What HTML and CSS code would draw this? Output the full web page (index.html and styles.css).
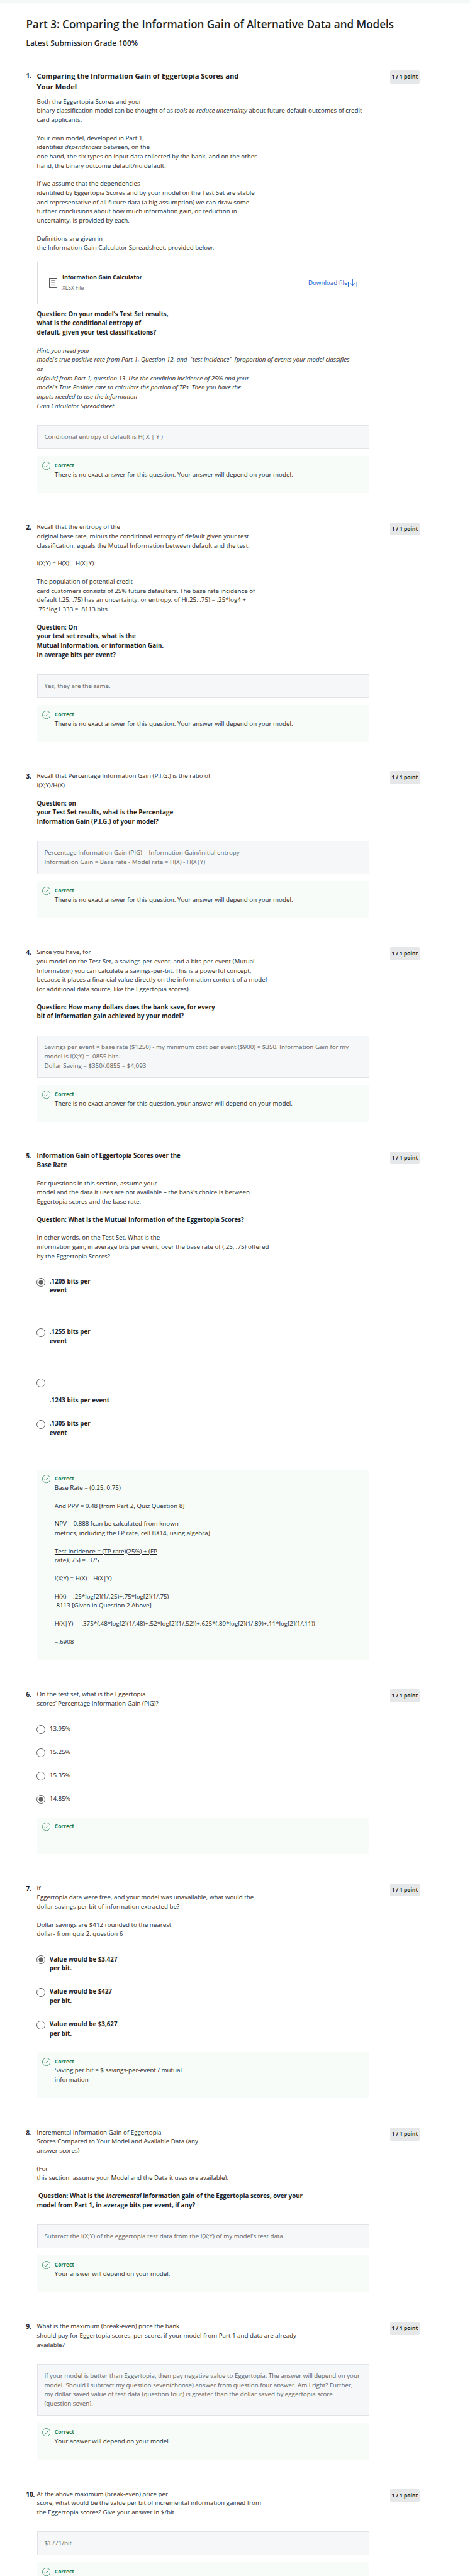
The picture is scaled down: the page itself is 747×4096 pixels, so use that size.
FILE: index.html
```html
<!DOCTYPE html>
<html lang="en">
<head>
<meta charset="utf-8">
<title>Part 3: Comparing the Information Gain of Alternative Data and Models</title>
<link rel="stylesheet" href="styles.css">
</head>
<body>
<svg class="defs" aria-hidden="true">
<symbol id="check" viewBox="0 0 20 20"><circle cx="10" cy="10" r="9.4" fill="none" stroke="currentColor" stroke-width="1.1"/><path d="M5.6 10.6l2.8 3L14 7" fill="none" stroke="currentColor" stroke-width="1.2"/></symbol>
</svg>
<div class="topband"></div>
<main class="page">
<h1 class="title">Part 3: Comparing the Information Gain of Alternative Data and Models</h1>
<p class="grade">Latest Submission Grade 100%</p>

<section class="question">
<span class="num">1.</span>
<div class="content">
<h2 class="heading">Comparing the Information Gain of Eggertopia Scores and<br>Your Model</h2>
<p>Both the Eggertopia Scores and your<br>binary classification model can be thought of as <em>tools to reduce uncertainty</em> about future default outcomes of credit<br>card applicants.</p>
<p>Your own model, developed in Part 1,<br>identifies <em>dependencies</em> between, on the<br>one hand, the six types on input data collected by the bank, and on the other<br>hand, the binary outcome default/no default.</p>
<p>If we assume that the dependencies<br>identified by Eggertopia Scores and by your model on the Test Set are stable<br>and representative of all future data (a big assumption) we can draw some<br>further conclusions about how much information gain, or reduction in<br>uncertainty, is provided by each.</p>
<p>Definitions are given in<br>the Information Gain Calculator Spreadsheet, provided below.</p>
<div class="file">
<svg class="file-icon" viewBox="0 0 19 23"><path d="M.6.6h17.8v21.8H.6zM4.5 5.8h10M4.5 9.8h10M4.5 13.8h10M4.5 17.8h10" fill="none" stroke="#1f1f1f" stroke-width="1.2"/></svg>
<div class="file-info"><span class="file-name">Information Gain Calculator</span><span class="file-type">XLSX File</span></div>
<a class="download"><span>Download file</span><svg class="dl-icon" viewBox="0 0 21 21"><path d="M.8 7.5v12.7h19.4V7.5M10.5 0v15.5M5.5 10.5l5 5 5-5" fill="none" stroke="currentColor" stroke-width="1.3"/></svg></a>
</div>
<p><b>Question: On your model’s Test Set results,<br>what is the conditional entropy of<br>default, given your test classifications?</b></p>
<p><em>Hint: you need your<br>model’s true positive rate from Part 1, Question 12, and&nbsp; “test incidence”&nbsp; [proportion of events your model classifies<br>as<br>default] from Part 1, question 13. Use the condition incidence of 25% and your<br>model’s True Positive rate to calculate the portion of TPs. Then you have the<br>inputs needed to use the Information<br>Gain Calculator Spreadsheet.</em></p>
<div class="answer">Conditional entropy of default is H( X | Y )</div>
<div class="feedback"><svg class="check"><use href="#check"/></svg><div><span class="correct">Correct</span><p>There is no exact answer for this question. Your answer will depend on your model.</p></div></div>
</div>
<span class="badge">1 / 1 point</span>
</section>

<section class="question">
<span class="num">2.</span>
<div class="content">
<p>Recall that the entropy of the<br>original base rate, minus the conditional entropy of default given your test<br>classification, equals the Mutual Information between default and the test.</p>
<p>I(X;Y) = H(X) – H(X|Y).</p>
<p>The population of potential credit<br>card customers consists of 25% future defaulters. The base rate incidence of<br>default (.25, .75) has an uncertainty, or entropy, of H(.25, .75) = .25*log4 +<br>.75*log1.333 = .8113 bits.</p>
<p><b>Question: On<br>your test set results, what is the<br>Mutual Information, or information Gain,<br>in average bits per event?</b></p>
<div class="answer">Yes, they are the same.</div>
<div class="feedback"><svg class="check"><use href="#check"/></svg><div><span class="correct">Correct</span><p>There is no exact answer for this question. Your answer will depend on your model.</p></div></div>
</div>
<span class="badge">1 / 1 point</span>
</section>

<section class="question">
<span class="num">3.</span>
<div class="content">
<p>Recall that Percentage Information Gain (P.I.G.) is the ratio of<br>I(X;Y)/H(X).</p>
<p><b>Question: on<br>your Test Set results, what is the Percentage<br>Information Gain (P.I.G.) of your model?</b></p>
<div class="answer">Percentage Information Gain (PIG) = Information Gain/initial entropy<br>Information Gain = Base rate - Model rate = H(X) - H(X|Y)</div>
<div class="feedback"><svg class="check"><use href="#check"/></svg><div><span class="correct">Correct</span><p>There is no exact answer for this question. Your answer will depend on your model.</p></div></div>
</div>
<span class="badge">1 / 1 point</span>
</section>

<section class="question">
<span class="num">4.</span>
<div class="content">
<p>Since you have, for<br>you model on the Test Set, a savings-per-event, and a bits-per-event (Mutual<br>Information) you can calculate a savings-per-bit. This is a powerful concept,<br>because it places a financial value directly on the information content of a model<br>(or additional data source, like the Eggertopia scores).</p>
<p><b>Question: How many dollars does the bank save, for every<br>bit of information gain achieved by your model?</b></p>
<div class="answer">Savings per event = base rate ($1250) - my minimum cost per event ($900) = $350. Information Gain for my<br>model is I(X;Y) = .0855 bits.<br>Dollar Saving = $350/.0855 = $4,093</div>
<div class="feedback"><svg class="check"><use href="#check"/></svg><div><span class="correct">Correct</span><p>There is no exact answer for this question. your answer will depend on your model.</p></div></div>
</div>
<span class="badge">1 / 1 point</span>
</section>

<section class="question">
<span class="num">5.</span>
<div class="content">
<p><b>Information Gain of Eggertopia Scores over the<br>Base Rate</b></p>
<p>For questions in this section, assume your<br>model and the data it uses are not available – the bank’s choice is between<br>Eggertopia scores and the base rate.</p>
<p><b>Question: What is the Mutual Information of the Eggertopia Scores?</b></p>
<p>In other words, on the Test Set, What is the<br>information gain, in average bits per event, over the base rate of (.25, .75) offered<br>by the Eggertopia Scores?</p>
<div class="options">
<div class="option"><i class="radio on"></i><div><p><b>.1205 bits per<br>event</b></p><p>&nbsp;</p></div></div>
<div class="option"><i class="radio"></i><div><p><b>.1255 bits per<br>event</b></p><p>&nbsp;</p></div></div>
<div class="option"><i class="radio"></i><div><p>&nbsp;</p><p><b>.1243 bits per event</b></p></div></div>
<div class="option"><i class="radio"></i><div><p><b>.1305 bits per<br>event</b></p><p>&nbsp;</p></div></div>
</div>
<div class="feedback after-options"><svg class="check"><use href="#check"/></svg><div><span class="correct">Correct</span><p>Base Rate = (0.25, 0.75)</p><p>And PPV = 0.48 [from Part 2, Quiz Question 8]</p><p>NPV = 0.888 [can be calculated from known<br>metrics, including the FP rate, cell BX14, using algebra]</p><p><u>Test Incidence = (TP rate)(25%) + (FP<br>rate)(.75) = .375</u></p><p>I(X;Y) = H(X) – H(X|Y)</p><p>H(X) = .25*log[2](1/.25)+.75*log[2](1/.75) =<br>.8113 [Given in Question 2 Above]</p><p>H(X|Y) =&nbsp; .375*(.48*log[2](1/.48)+.52*log[2](1/.52))+.625*(.89*log[2](1/.89)+.11*log[2](1/.11))</p><p>=.6908</p></div></div>
</div>
<span class="badge">1 / 1 point</span>
</section>

<section class="question">
<span class="num">6.</span>
<div class="content">
<p>On the test set, what is the Eggertopia<br>scores’ Percentage Information Gain (PIG)?</p>
<div class="options">
<div class="option"><i class="radio"></i><p>13.95%</p></div>
<div class="option"><i class="radio"></i><p>15.25%</p></div>
<div class="option"><i class="radio"></i><p>15.35%</p></div>
<div class="option"><i class="radio on"></i><p>14.85%</p></div>
</div>
<div class="feedback after-options"><svg class="check"><use href="#check"/></svg><div><span class="correct">Correct</span><p>&nbsp;</p></div></div>
</div>
<span class="badge">1 / 1 point</span>
</section>

<section class="question">
<span class="num">7.</span>
<div class="content">
<p>If<br>Eggertopia data were free, and your model was unavailable, what would the<br>dollar savings per bit of information extracted be?</p>
<p>Dollar savings are $412 rounded to the nearest<br>dollar- from quiz 2, question 6</p>
<div class="options">
<div class="option"><i class="radio on"></i><p><b>Value would be $3,427<br>per bit.</b></p></div>
<div class="option"><i class="radio"></i><p><b>Value would be $427<br>per bit.</b></p></div>
<div class="option"><i class="radio"></i><p><b>Value would be $3,627<br>per bit.</b></p></div>
</div>
<div class="feedback after-options"><svg class="check"><use href="#check"/></svg><div><span class="correct">Correct</span><p>Saving per bit = $ savings-per-event / mutual<br>information</p></div></div>
</div>
<span class="badge">1 / 1 point</span>
</section>

<section class="question">
<span class="num">8.</span>
<div class="content">
<p>Incremental Information Gain of Eggertopia<br>Scores Compared to Your Model and Available Data (any<br>answer scores)</p>
<p>(For<br>this section, assume your Model and the Data it uses <em>are</em> available).</p>
<p><b>&nbsp;Question: What is the <em>incremental</em> information gain of the Eggertopia scores, over your<br>model from Part 1, in average bits per event, if any?</b></p>
<div class="answer">Subtract the I(X;Y) of the eggertopia test data from the I(X;Y) of my model's test data</div>
<div class="feedback"><svg class="check"><use href="#check"/></svg><div><span class="correct">Correct</span><p>Your answer will depend on your model.</p></div></div>
</div>
<span class="badge">1 / 1 point</span>
</section>

<section class="question">
<span class="num">9.</span>
<div class="content">
<p>What is the maximum (break-even) price the bank<br>should pay for Eggertopia scores, per score, if your model from Part 1 and data are already<br>available?</p>
<div class="answer">If your model is better than Eggertopia, then pay negative value to Eggertopia. The answer will depend on your<br>model. Should I subtract my question seven(choose) answer from question four answer. Am I right? Further,<br>my dollar saved value of test data (question four) is greater than the dollar saved by eggertopia score<br>(question seven).</div>
<div class="feedback"><svg class="check"><use href="#check"/></svg><div><span class="correct">Correct</span><p>Your answer will depend on your model.</p></div></div>
</div>
<span class="badge">1 / 1 point</span>
</section>

<section class="question">
<span class="num">10.</span>
<div class="content">
<p>At the above maximum (break-even) price per<br>score, what would be the value per bit of incremental information gained from<br>the Eggertopia scores? Give your answer in $/bit.</p>
<div class="answer">$1771/bit</div>
<div class="feedback last"><svg class="check"><use href="#check"/></svg><div><span class="correct">Correct</span></div></div>
</div>
<span class="badge">1 / 1 point</span>
</section>
</main>
</body>
</html>
```

FILE: styles.css
```css
html { font-size: 6.9838px; }
body {
  margin: 0;
  height: 4096px;
  overflow: hidden;
  background: #fff;
  color: #1f1f1f;
  font-family: "Open Sans", "Noto Sans", sans-serif;
  font-size: 1.4rem;
  line-height: 2.1rem;
}
p, h1, h2 { margin: 0; font-weight: inherit; }
b { font-weight: 700; }
.defs { display: none; }
.topband { height: 1rem; background: linear-gradient(#f4faf8 50%, #fff); }
.page { padding-left: 5.93rem; white-space: nowrap; }
.title { margin-top: 2.6rem; font-size: 2.44rem; line-height: 4rem; font-weight: 600; }
.grade { margin-top: 1.2rem; margin-bottom: 4.9rem; font-size: 1.72rem; line-height: 2.4rem; font-weight: 600; }
.question { display: flex; align-items: flex-start; margin-bottom: 6.67rem; }
.num { width: 2.46rem; flex: none; padding-top: 0.12rem; line-height: 2.4rem; font-family: "Noto Sans", sans-serif; font-weight: 700; font-size: 1.4rem; }
.content { width: 75.6rem; flex: none; padding-top: 0.12rem; }
.content p + p { margin-top: 2rem; }
.heading { font-size: 1.6rem; line-height: 2.4rem; font-weight: 700; margin-bottom: 1.15rem; }
.badge { margin-left: 4.75rem; width: 6.75rem; height: 2.95rem; line-height: 3rem; border-radius: 0.3rem; background: #e5e7e8; text-align: center; font-family: "Noto Sans", sans-serif; font-size: 1.2rem; font-weight: 700; }
.file { box-sizing: border-box; display: flex; align-items: center; height: 9.74rem; margin: 1.98rem 0 1.25rem; padding: 0 2.5rem 0 2.65rem; border: 1px solid #dadce0; }
.file-icon { width: 1.9rem; height: 2.3rem; flex: none; }
.file-info { display: flex; flex-direction: column; gap: 0.3rem; margin-left: 1.1rem; }
.file-name { font-weight: 700; font-size: 1.3rem; }
.file-type { color: #636363; font-size: 1.2rem; }
.download { display: flex; align-items: center; gap: 0.15rem; margin-left: auto; color: #0056d2; text-decoration: underline; }
.dl-icon { width: 2.1rem; height: 2.1rem; }
.answer { box-sizing: border-box; margin-top: 3.26rem; padding: 1.52rem 1.56rem; border: 1px solid #e1e3e6; background: #f5f7f8; color: #636363; }
.feedback { display: flex; margin-top: 1.62rem; padding: 1.1rem 1.2rem 3.1rem; background: #f7fcf9; }
.feedback.after-options { margin-top: 3.13rem; }
.check { width: 1.9rem; height: 1.9rem; flex: none; margin: 0.12rem 0.92rem 0 0.03rem; color: #1d7c50; }
.correct { display: block; color: #1d7c50; font-weight: 700; font-size: 1.2rem; }
.options { display: flex; flex-direction: column; gap: 3.2rem; margin-top: 3.65rem; }
.option { display: flex; align-items: flex-start; }
.radio { box-sizing: border-box; flex: none; width: 2rem; height: 2rem; margin: 0.12rem 0.95rem -0.1rem -0.05rem; border: 0.18rem solid #636363; border-radius: 50%; }
.radio.on { background: radial-gradient(circle, #636363 0.48rem, transparent 0.55rem); }
.last { padding-bottom: 6rem; }
```
